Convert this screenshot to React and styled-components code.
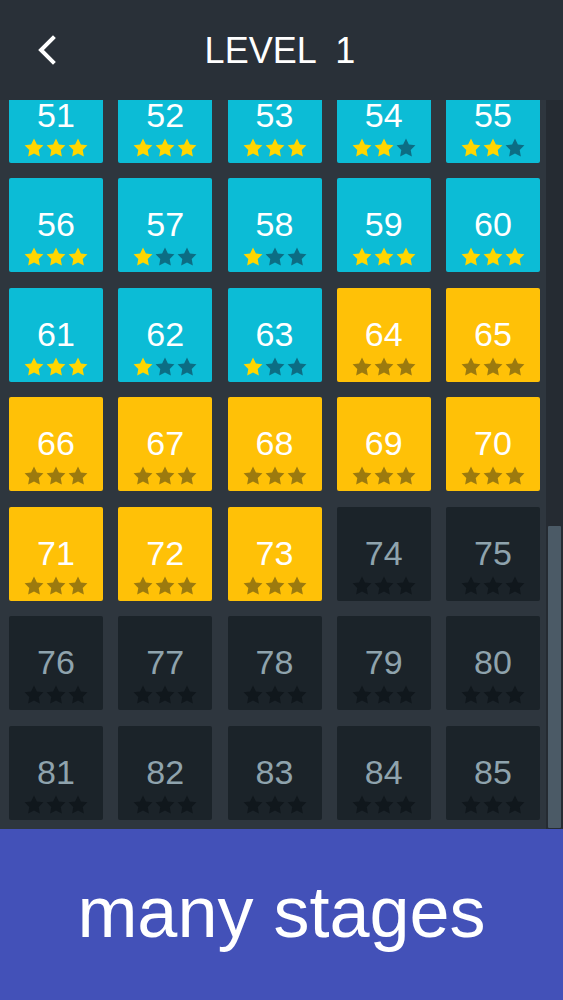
import React from 'react';
import styled, { createGlobalStyle } from 'styled-components';

const GlobalStyle = createGlobalStyle`
  html, body {
    margin: 0;
    padding: 0;
    background: #2e363e;
  }
  * {
    box-sizing: border-box;
  }
`;

const Screen = styled.div`
  width: 563px;
  height: 1000px;
  display: flex;
  flex-direction: column;
  font-family: 'Liberation Sans', Arial, sans-serif;
  overflow: hidden;
`;

const Header = styled.header`
  height: 100px;
  flex: none;
  display: grid;
  grid-template-columns: 90px 1fr 90px;
  align-items: center;
  background: #293038;
  color: #fff;
`;

const BackButton = styled.button`
  justify-self: start;
  margin-left: 36px;
  padding: 0;
  border: 0;
  background: none;
  display: flex;
  cursor: pointer;
`;

const Title = styled.h1`
  margin: 0;
  text-align: center;
  font-size: 36px;
  font-weight: 400;
  white-space: pre;
  padding-top: 2px;
  padding-right: 3px;
`;

const Body = styled.main`
  height: 729px;
  flex: none;
  display: flex;
  background: #2e363e;
`;

const Viewport = styled.div`
  flex: 1;
  overflow: hidden;
  padding-left: 9px;
`;

const LevelGrid = styled.div`
  display: grid;
  grid-template-columns: repeat(5, 94px);
  grid-auto-rows: 94px;
  column-gap: 15.25px;
  row-gap: 15.5px;
  margin-top: -31.5px;
`;

const tileColors = {
  done: { bg: '#0cbcd6', text: '#ffffff', on: '#ffd600', off: '#0c6d84' },
  open: { bg: '#ffc107', text: '#ffffff', on: '#ffd600', off: '#9c7a0e' },
  locked: { bg: '#1b2329', text: '#8fa3ad', on: '#ffd600', off: '#10171c' },
};

const Tile = styled.div`
  display: flex;
  flex-direction: column;
  align-items: center;
  justify-content: flex-end;
  padding-bottom: 6px;
  border-radius: 2px;
  background: ${p => tileColors[p.$state].bg};
  color: ${p => tileColors[p.$state].text};
`;

const Number = styled.span`
  font-size: 34px;
  line-height: 34px;
  margin-bottom: 6px;
`;

const Stars = styled.div`
  display: flex;
  gap: 2px;
`;

const Track = styled.div`
  width: 17px;
  flex: none;
  background: #252b32;
  padding: 426px 2px 0 2px;
`;

const Thumb = styled.div`
  height: 302px;
  border-radius: 1px;
  background: #4b5a66;
`;

const Footer = styled.footer`
  flex: 1;
  display: flex;
  align-items: center;
  justify-content: center;
  background: #4351b8;
  color: #fff;
  font-size: 72px;
  padding-bottom: 6px;
`;

const Star = ({ color }) => (
  <svg width="20" height="19" viewBox="0 0 24 23">
    <path
      fill={color}
      d="M12 0.6l3.5 7.2 7.9 1.1-5.7 5.6 1.4 7.9L12 18.7l-7.1 3.7 1.4-7.9L0.6 8.9l7.9-1.1z"
    />
  </svg>
);

// stars won so far; levels after 63 up to 73 are open, the rest locked
const earned = {
  51: 3, 52: 3, 53: 3, 54: 2, 55: 2,
  56: 3, 57: 1, 58: 1, 59: 3, 60: 3,
  61: 3, 62: 1, 63: 1,
};

const levels = Array.from({ length: 35 }, (_, i) => {
  const n = 51 + i;
  let state = 'locked';
  if (earned[n]) state = 'done';
  else if (n <= 73) state = 'open';
  return { n, state, stars: earned[n] || 0 };
});

const LevelTile = ({ n, state, stars }) => {
  const c = tileColors[state];
  return (
    <Tile $state={state}>
      <Number>{n}</Number>
      <Stars>
        {[0, 1, 2].map(i => (
          <Star key={i} color={i < stars ? c.on : c.off} />
        ))}
      </Stars>
    </Tile>
  );
};

export default function App() {
  return (
    <Screen>
      <GlobalStyle />
      <Header>
        <BackButton aria-label="back">
          <svg width="22" height="30" viewBox="0 0 22 30">
            <path
              d="M17 3L5 15l12 12"
              fill="none"
              stroke="#fff"
              strokeWidth="4"
              strokeLinecap="square"
            />
          </svg>
        </BackButton>
        <Title>{'LEVEL  1'}</Title>
        <span />
      </Header>
      <Body>
        <Viewport>
          <LevelGrid>
            {levels.map(l => (
              <LevelTile key={l.n} {...l} />
            ))}
          </LevelGrid>
        </Viewport>
        <Track>
          <Thumb />
        </Track>
      </Body>
      <Footer>many stages</Footer>
    </Screen>
  );
}
